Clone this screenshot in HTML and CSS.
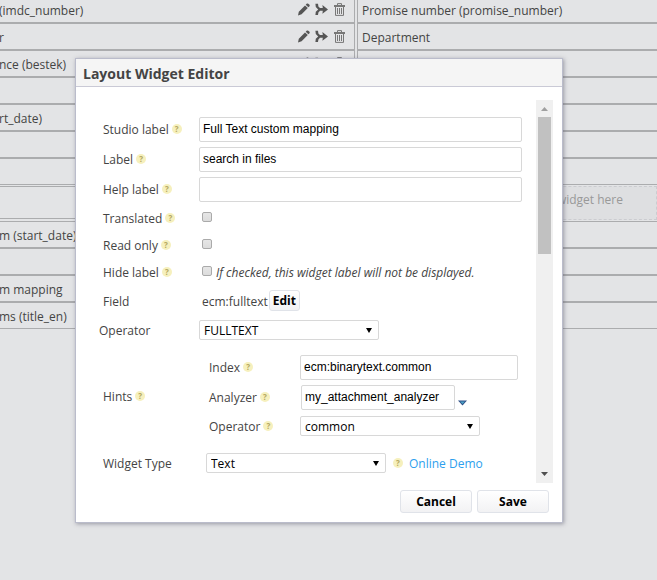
FILE: index.html
```html
<!DOCTYPE html>
<html lang="en">
<head>
<meta charset="utf-8">
<title>Layout Widget Editor</title>
<link rel="stylesheet" href="styles.css">
</head>
<body>
<svg class="sprite" aria-hidden="true">
  <symbol id="pencil" viewBox="0 0 13 13"><path d="M1 12.4 L1.8 8.8 L8 2.4 L10.8 5 L4.6 11.3 Z M8.7 1.7 L9.9 .6 Q10.6 .2 11.3 .7 L12.5 1.8 Q13 2.5 12.5 3.2 L11.4 4.3 Z"/></symbol>
  <symbol id="merge" viewBox="0 0 13 13"><path d="M.4 .8 L3 .8 L3.4 3.4 L5 5.1 L7.8 5.1 L7.4 2 L13 6.4 L7.4 10.8 L7.8 7.7 L5 7.7 L3.4 9.4 L3 12 L.4 12 L.8 8.8 L3.2 6.4 L.8 4 Z"/></symbol>
  <symbol id="trash" viewBox="0 0 13 13"><path d="M4.5 2 V.6 H8.5 V2 M1 2.5 H12 M2.5 4 V12.4 H10.5 V4 M1 3.5 H12 M4.5 5 V11 M6.5 5 V11 M8.5 5 V11" fill="none" stroke="currentColor"/></symbol>
</svg>
<main class="layout">
  <section class="column column-left">
    <div class="widget first"><span>(imdc_number)</span><span class="tools"><svg><use href="#pencil"/></svg><svg><use href="#merge"/></svg><svg class="trash"><use href="#trash"/></svg></span></div>
    <div class="widget"><span>r</span><span class="tools"><svg><use href="#pencil"/></svg><svg><use href="#merge"/></svg><svg class="trash"><use href="#trash"/></svg></span></div>
    <div class="widget"><span>nce (bestek)</span><span class="tools"><svg><use href="#pencil"/></svg><svg><use href="#merge"/></svg><svg class="trash"><use href="#trash"/></svg></span></div>
    <div class="widget"></div>
    <div class="widget"><span>rt_date)</span></div>
    <div class="widget"></div>
    <div class="widget"></div>
    <div class="widget tall"></div>
    <div class="widget"><span>m (start_date)</span></div>
    <div class="widget"></div>
    <div class="widget"><span>m mapping</span></div>
    <div class="widget"><span>ms (title_en)</span></div>
  </section>
  <section class="column column-right">
    <div class="widget first"><span>Promise number (promise_number)</span></div>
    <div class="widget"><span>Department</span></div>
    <div class="widget"></div>
    <div class="widget"></div>
    <div class="widget"></div>
    <div class="widget"></div>
    <div class="widget"></div>
    <div class="dropzone">widget here</div>
    <div class="widget"></div>
    <div class="widget"></div>
    <div class="widget"></div>
    <div class="widget"></div>
  </section>
</main>

<div class="dialog" role="dialog" aria-labelledby="dialog-title">
  <h1 class="dialog-title" id="dialog-title">Layout Widget Editor</h1>
  <div class="viewport">
    <form class="form">
      <div class="row"><label class="name" for="studio">Studio label<i class="help">?</i></label><input class="text" id="studio" value="Full Text custom mapping"></div>
      <div class="row"><label class="name" for="label">Label<i class="help">?</i></label><input class="text" id="label" value="search in files"></div>
      <div class="row"><label class="name" for="helplabel">Help label<i class="help">?</i></label><input class="text" id="helplabel"></div>
      <div class="row check"><label class="name" for="translated">Translated<i class="help">?</i></label><input type="checkbox" id="translated"></div>
      <div class="row check"><label class="name" for="readonly">Read only<i class="help">?</i></label><input type="checkbox" id="readonly"></div>
      <div class="row check"><label class="name" for="hide">Hide label<i class="help">?</i></label><input type="checkbox" id="hide"><em>If checked, this widget label will not be displayed.</em></div>
      <div class="row field"><span class="name">Field</span><span class="value">ecm:fulltext</span><button class="button small" type="button">Edit</button></div>
      <div class="row outer"><label class="name" for="operator">Operator</label><span class="select"><select id="operator"><option>FULLTEXT</option></select></span></div>
      <div class="row hints">
        <span class="name">Hints<i class="help">?</i></span>
        <div class="subform">
          <div class="row"><label class="name" for="index">Index<i class="help">?</i></label><input class="text" id="index" value="ecm:binarytext.common"></div>
          <div class="row"><label class="name" for="analyzer">Analyzer<i class="help">?</i></label><span class="suggest"><input class="text" id="analyzer" value="my_attachment_analyzer"><svg class="caret" viewBox="0 0 9 6"><path d="M0 .5 H9 L4.5 5.5 Z" fill="#2d4f86"/><path d="M2 1.5 H7 L4.5 4 Z" fill="#4ba3c7"/></svg></span></div>
          <div class="row short"><label class="name" for="suboperator">Operator<i class="help">?</i></label><span class="select"><select id="suboperator"><option>common</option></select></span></div>
        </div>
      </div>
      <div class="row type"><label class="name" for="type">Widget Type</label><span class="select"><select id="type"><option>Text</option></select></span><i class="help">?</i><a href="#demo">Online Demo</a></div>
    </form>
    <div class="scrollbar" aria-hidden="true"><span class="up"></span><span class="thumb"></span><span class="down"></span></div>
  </div>
  <div class="actions"><button class="button" type="button">Cancel</button><button class="button" type="button">Save</button></div>
</div>
</body>
</html>
```
FILE: styles.css
```css
* { box-sizing: border-box; }

body {
  margin: 0;
  min-height: 100vh;
  background: #e3e4e6;
  color: #444;
  font: 12px/18px "Open Sans", sans-serif;
  overflow: hidden;
}

.sprite { display: none; }

/* Layout grid behind the dialog */
.layout {
  display: grid;
  grid-template-columns: 355px 1fr;
  column-gap: 2px;
}

.widget {
  display: flex;
  align-items: center;
  justify-content: space-between;
  height: 27px;
  padding-top: 2px;
  border: 1px solid #abacae;
  border-width: 1px 0;
}

.widget.first { height: 23px; padding-top: 0; padding-bottom: 1px; border-top: 0; }
.column-left .widget { border-right-width: 1px; padding-right: 8px; text-indent: -1px; }
.column-right .widget { border-left-width: 1px; padding-left: 4px; }
.widget.tall { height: 33px; margin: 1px 0 2px; }

.dropzone {
  height: 34px;
  margin: 1px 0;
  padding: 4px 33px 0 0;
  border: 1px dashed #cbccd0;
  background: #dedfe1;
  color: #999;
  text-align: right;
}

.tools { display: flex; gap: 5px; color: #555; }
.tools svg { width: 13px; height: 13px; margin-top: -2px; fill: currentColor; }
.tools .trash { color: #777; }

/* Dialog */
.dialog {
  position: absolute;
  top: 58px;
  left: 75px;
  width: 488px;
  border: 1px solid #babccb;
  background: #fff;
  box-shadow: 1px 1px 4px rgba(80, 80, 100, .5);
}

.dialog-title {
  height: 28px;
  margin: 0;
  padding: 4px 7px 3px;
  border-bottom: 1px solid #cacad6;
  background: #f5f5f5;
  font-size: 14px;
  line-height: 21px;
}

.viewport {
  display: flex;
  margin: 13px 9px 0 23px;
}

.form { flex: 1; padding: 14px 14px 6px 0; }

.row {
  display: flex;
  align-items: center;
  height: 30px;
  padding-left: 4px;
}

.name {
  display: flex;
  align-items: center;
  flex: 0 0 96px;
  padding-top: 2px;
}

.help {
  width: 10px;
  height: 10px;
  margin: -2px 0 0 3px;
  border-radius: 50%;
  background: #f6f0bd;
  color: #b3a760;
  font: bold 8px/10px "Open Sans", sans-serif;
  text-align: center;
}

.text {
  flex: 1;
  min-width: 0;
  height: 25px;
  padding: 0 3px;
  border: 1px solid #d8d8d8;
  border-radius: 2px;
  background: #fff;
  color: #000;
  font: 12px "Liberation Sans", sans-serif;
}

.check { height: 27px; }
.check em { padding-top: 2px; }

.check input {
  appearance: none;
  width: 10px;
  height: 10px;
  margin: 0 4px 2px 3px;
  border: 1px solid #aaa;
  border-radius: 2px;
  background: linear-gradient(#e6e6e6, #dcdcdc);
}

.field { height: 31px; }
.value { padding: 2px 1px 0 3px; }

.button {
  width: 72px;
  height: 23px;
  padding: 0;
  border: 1px solid #e0e3e9;
  border-radius: 3px;
  background: linear-gradient(#fff, #f2f2f4);
  color: #000;
  font: bold 12px/18px "Open Sans", sans-serif;
}

.button.small { width: 31px; height: 21px; }

.outer { height: 28px; padding-left: 0; }
.outer .name { flex-basis: 100px; }

.select { position: relative; width: 180px; }

.select select {
  appearance: none;
  display: block;
  width: 100%;
  height: 20px;
  padding: 0 4px;
  border: 1px solid #d8d8d8;
  border-radius: 2px;
  background: #fff;
  color: #000;
  font: 12px "Open Sans", sans-serif;
}

.select::after {
  content: "";
  position: absolute;
  top: 8px;
  right: 7px;
  width: 6px;
  height: 5px;
  background: #000;
  clip-path: polygon(0 0, 100% 0, 50% 100%);
  pointer-events: none;
}

.hints { height: auto; margin-top: 8px; }
.subform { flex: 1; padding: 0 4px 0 6px; }
.subform .name { flex-basis: 91px; }
.subform .short { height: 28px; }
.suggest { display: flex; align-items: center; gap: 3px; padding-left: 1px; }
.suggest .text { flex: none; width: 154px; }
.caret { width: 9px; height: 6px; margin-top: 12px; }

.type { height: 28px; margin-top: 9px; }
.type .name { flex-basis: 103px; }
.type .help { margin: 0 6px 0 7px; }
.type a { padding-top: 2px; color: #2e9fee; text-decoration: none; }

.scrollbar {
  display: flex;
  flex-direction: column;
  align-items: center;
  width: 17px;
  padding: 7px 0;
  background: #f0f0f0;
}

.up, .down { width: 7px; height: 4px; }
.up { background: #a0a0a0; clip-path: polygon(50% 0, 100% 100%, 0 100%); }
.down { margin-top: auto; background: #505050; clip-path: polygon(0 0, 100% 0, 50% 100%); }
.thumb { width: 13px; height: 137px; margin-top: 6px; background: #c1c1c1; }

.actions {
  display: flex;
  justify-content: flex-end;
  gap: 5px;
  padding: 7px 13px 9px;
}
```
